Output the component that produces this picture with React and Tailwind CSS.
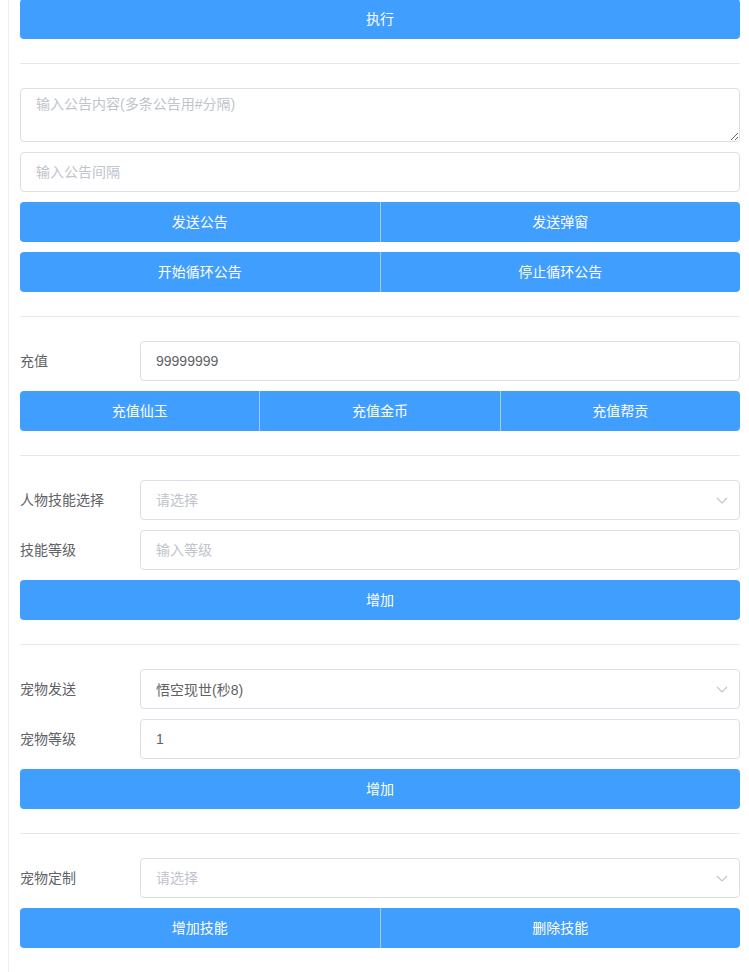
const font = { fontFamily: '"Liberation Sans", "Noto Sans CJK SC", sans-serif' };

function Btn({ label }) {
  return (
    <button className="w-full h-10 rounded bg-[#409eff] text-white text-sm font-normal">{label}</button>
  );
}

function BtnGroup({ labels }) {
  return (
    <div className="flex w-full h-10">
      {labels.map((l, i) => (
        <button
          key={l}
          className={`flex-1 h-10 bg-[#409eff] text-white text-sm font-normal ${i === 0 ? 'rounded-l' : 'border-l border-white/50'} ${i === labels.length - 1 ? 'rounded-r' : ''}`}
        >
          {l}
        </button>
      ))}
    </div>
  );
}

function Input({ placeholder, value }) {
  return (
    <input
      readOnly
      value={value || ''}
      placeholder={placeholder}
      className="w-full h-10 border border-[#dcdfe6] rounded px-[15px] text-sm text-[#606266] placeholder:text-[#c0c4cc] outline-none bg-white"
    />
  );
}

function Select({ placeholder, value }) {
  return (
    <div className="relative w-full">
      <Input placeholder={placeholder} value={value} />
      <svg width="12" height="7" viewBox="0 0 12 7" fill="none" className="absolute right-3 top-[17px]">
        <polyline points="1,1 6,6 11,1" stroke="#c0c4cc" strokeWidth="1.2" />
      </svg>
    </div>
  );
}

function Row({ label, children }) {
  return (
    <div className="flex items-center">
      <label className="w-[120px] shrink-0 text-sm text-[#606266]">{label}</label>
      <div className="flex-1">{children}</div>
    </div>
  );
}

function Divider() {
  return <div className="h-px bg-[#e4e7ed] my-6" />;
}

export default function App() {
  return (
    <div className="min-h-screen bg-white" style={font}>
      <div className="ml-2 min-h-screen border-l border-[#ebeef5] pl-[11px] pr-[9px] pb-6">
        <div className="-mt-px">
          <Btn label="执行" />
        </div>
        <Divider />
        <div className="flex flex-col gap-[10px]">
          <textarea
            readOnly
            rows={2}
            placeholder="输入公告内容(多条公告用#分隔)"
            className="block w-full h-[54px] border border-[#dcdfe6] rounded px-[15px] py-[5px] text-sm leading-[21px] text-[#606266] placeholder:text-[#c0c4cc] outline-none"
          />
          <Input placeholder="输入公告间隔" />
          <BtnGroup labels={['发送公告', '发送弹窗']} />
          <BtnGroup labels={['开始循环公告', '停止循环公告']} />
        </div>
        <Divider />
        <div className="flex flex-col gap-[10px]">
          <Row label="充值">
            <Input value="99999999" />
          </Row>
          <BtnGroup labels={['充值仙玉', '充值金币', '充值帮贡']} />
        </div>
        <Divider />
        <div className="flex flex-col gap-[10px]">
          <Row label="人物技能选择">
            <Select placeholder="请选择" />
          </Row>
          <Row label="技能等级">
            <Input placeholder="输入等级" />
          </Row>
          <Btn label="增加" />
        </div>
        <Divider />
        <div className="flex flex-col gap-[10px]">
          <Row label="宠物发送">
            <Select value="悟空现世(秒8)" />
          </Row>
          <Row label="宠物等级">
            <Input value="1" />
          </Row>
          <Btn label="增加" />
        </div>
        <Divider />
        <div className="flex flex-col gap-[10px]">
          <Row label="宠物定制">
            <Select placeholder="请选择" />
          </Row>
          <BtnGroup labels={['增加技能', '删除技能']} />
        </div>
      </div>
    </div>
  );
}
